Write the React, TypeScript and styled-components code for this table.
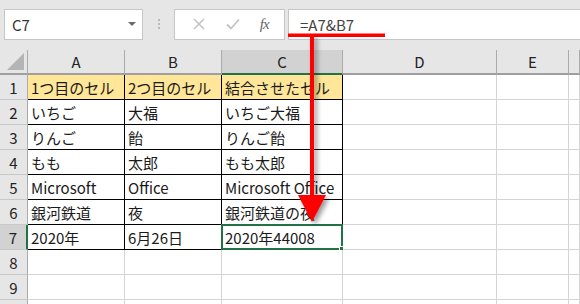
import styled, { createGlobalStyle } from 'styled-components';

const GlobalStyle = createGlobalStyle`
  html, body {
    margin: 0;
    padding: 0;
    background: #e6e6e6;
  }
  body {
    font-family: "Noto Sans CJK JP", "Noto Sans", sans-serif;
  }
`;

const COLS = ['A', 'B', 'C', 'D', 'E', ''];
// rows with a visible number; one more row peeks in at the bottom edge
const ROWS = 9;

const data: string[][] = [
  ['1つ目のセル', '2つ目のセル', '結合させたセル'],
  ['いちご', '大福', 'いちご大福'],
  ['りんご', '飴', 'りんご飴'],
  ['もも', '太郎', 'もも太郎'],
  ['Microsoft', 'Office', 'Microsoft Office'],
  ['銀河鉄道', '夜', '銀河鉄道の夜'],
  ['2020年', '6月26日', '2020年44008'],
];

const activeCol = 2;
const activeRow = 6;

export default function App() {
  return (
    <>
      <GlobalStyle />
      <Page>
        <FormulaBar>
          <NameBox>
            <NameText>C7</NameText>
            <DropArrow />
          </NameBox>
          <Grip>
            <i />
            <i />
            <i />
          </Grip>
          <ButtonGroup>
            <svg width="14" height="14" viewBox="0 0 14 14">
              <path d="M2 2 L12 12 M12 2 L2 12" stroke="#c3c3c3" strokeWidth="1.6" />
            </svg>
            <svg width="16" height="14" viewBox="0 0 16 14">
              <path d="M2 7.5 L6 11.5 L14 2.5" stroke="#c3c3c3" strokeWidth="1.8" fill="none" />
            </svg>
            <FxLabel>fx</FxLabel>
          </ButtonGroup>
          <FormulaInput>=A7&amp;B7</FormulaInput>
        </FormulaBar>

        <Sheet>
          <Corner>
            <svg width="17" height="17" viewBox="0 0 17 17">
              <polygon points="17,0 17,17 0,17" fill="#b4b4b4" />
            </svg>
          </Corner>
          {COLS.map((c, i) => (
            <ColHeader key={c || 'f'} $active={i === activeCol}>
              {c}
            </ColHeader>
          ))}
          {Array.from({ length: ROWS + 1 }).map((_, r) => (
            <RowGroup key={r}>
              <RowHeader $active={r === activeRow}>{r < ROWS ? r + 1 : ''}</RowHeader>
              {COLS.map((c, ci) => {
                const value = data[r]?.[ci];
                const inTable = r < data.length && ci < 3;
                return (
                  <Cell
                    key={c || 'f'}
                    $boxed={inTable}
                    $title={inTable && r === 0}
                    $selected={r === activeRow && ci === activeCol}
                  >
                    {value}
                  </Cell>
                );
              })}
            </RowGroup>
          ))}
        </Sheet>

        <Arrow width="580" height="304" viewBox="0 0 580 304">
          <rect x="288" y="33.5" width="97" height="3.5" fill="#ff0000" />
          <g style={{ filter: 'drop-shadow(3px 3px 2.5px rgba(0,0,0,0.4))' }}>
            <rect x="310" y="34" width="4" height="164" fill="#ff0000" />
            <polygon points="298,195 326,195 312,222" fill="#ff0000" />
          </g>
        </Arrow>
      </Page>
    </>
  );
}

const Page = styled.div`
  position: relative;
  width: 580px;
  height: 304px;
  overflow: hidden;
  background: #e6e6e6;
`;

const FormulaBar = styled.div`
  display: flex;
  align-items: center;
  height: 50px;
  padding: 0 0 2px 4px;
  box-sizing: border-box;
`;

const NameBox = styled.div`
  display: flex;
  align-items: center;
  justify-content: space-between;
  width: 139px;
  height: 31px;
  box-sizing: border-box;
  background: #fff;
  border: 1px solid #c6c6c6;
  padding: 0 6px 0 7px;
`;

const NameText = styled.span`
  font-size: 15px;
  color: #333;
`;

const DropArrow = styled.span`
  width: 0;
  height: 0;
  border-left: 4px solid transparent;
  border-right: 4px solid transparent;
  border-top: 4px solid #6a6a6a;
`;

const Grip = styled.div`
  display: flex;
  flex-direction: column;
  gap: 2px;
  margin: 0 14px 0 15px;

  i {
    width: 2px;
    height: 2px;
    background: #b8b8b8;
  }
`;

const ButtonGroup = styled.div`
  display: flex;
  align-items: center;
  justify-content: space-around;
  width: 111px;
  height: 31px;
  box-sizing: border-box;
  background: #fff;
  border: 1px solid #c6c6c6;
  padding: 0 6px 0 8px;
`;

const FxLabel = styled.span`
  font-family: "Liberation Serif", "DejaVu Serif", serif;
  font-style: italic;
  font-size: 15px;
  color: #666;
  letter-spacing: -1px;
`;

const FormulaInput = styled.div`
  flex: 1;
  height: 31px;
  box-sizing: border-box;
  margin-left: 3px;
  background: #fff;
  border: 1px solid #c6c6c6;
  border-right: none;
  padding-left: 11px;
  display: flex;
  align-items: center;
  font-size: 15px;
  color: #444;
`;

const Sheet = styled.div`
  display: grid;
  grid-template-columns: 28px 97px 97px 121px 154px 72px 1fr;
  grid-auto-rows: 25px;
  background: #fff;
`;

const RowGroup = styled.div`
  display: contents;
`;

const HeaderBase = styled.div`
  display: flex;
  align-items: center;
  justify-content: center;
  box-sizing: border-box;
  background: #e6e6e6;
  font-size: 15px;
  color: #222;
`;

const Corner = styled(HeaderBase)`
  align-items: flex-end;
  justify-content: flex-end;
  padding: 0 3px 3px 0;
  border-right: 1px solid #ababab;
  border-bottom: 2px solid #9f9f9f;
`;

const ColHeader = styled(HeaderBase)<{ $active: boolean }>`
  background: ${(p) => (p.$active ? '#d2d2d2' : '#e6e6e6')};
  border-right: 1px solid #ababab;
  border-bottom: 2px solid ${(p) => (p.$active ? '#217346' : '#9f9f9f')};
`;

const RowHeader = styled(HeaderBase)<{ $active: boolean }>`
  background: ${(p) => (p.$active ? '#d2d2d2' : '#e6e6e6')};
  border-right: ${(p) => (p.$active ? '2px solid #217346' : '1px solid #ababab')};
  border-bottom: 1px solid #c8c8c8;
`;

const Cell = styled.div<{ $boxed: boolean; $title: boolean; $selected: boolean }>`
  position: relative;
  display: flex;
  align-items: center;
  box-sizing: border-box;
  padding: 1px 0 0 3px;
  white-space: nowrap;
  font-size: 15px;
  color: #1a1a1a;
  background: ${(p) => (p.$title ? '#ffe699' : '#fff')};
  border-right: 1px solid ${(p) => (p.$boxed ? '#000' : '#d4d4d4')};
  border-bottom: 1px solid ${(p) => (p.$boxed ? '#000' : '#d4d4d4')};

  ${(p) =>
    p.$selected &&
    `
    &::before {
      content: '';
      position: absolute;
      left: -1px;
      top: -1px;
      right: -1px;
      bottom: -1px;
      border: 2px solid #217346;
    }
    &::after {
      content: '';
      position: absolute;
      right: -4px;
      bottom: -4px;
      width: 5px;
      height: 5px;
      background: #217346;
      border: 1px solid #fff;
    }
  `}
`;

const Arrow = styled.svg`
  position: absolute;
  left: 0;
  top: 0;
  pointer-events: none;
`;
